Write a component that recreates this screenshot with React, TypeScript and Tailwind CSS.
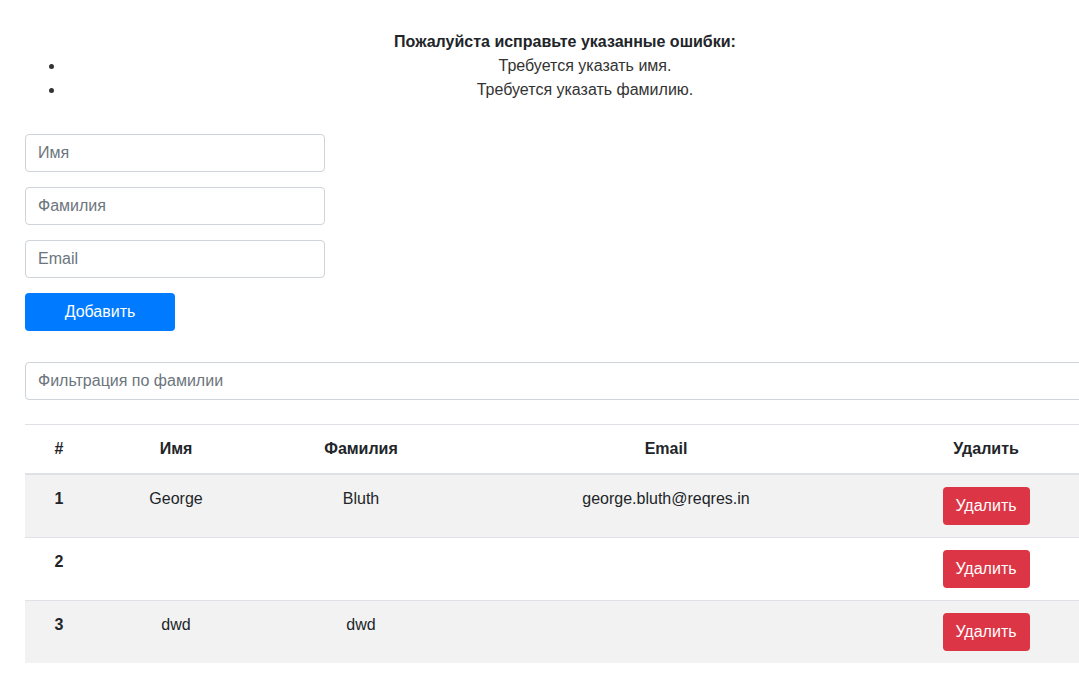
import React, { useState } from "react";

type User = {
  id: number;
  firstName: string;
  lastName: string;
  email: string;
};

const initialUsers: User[] = [
  { id: 1, firstName: "George", lastName: "Bluth", email: "george.bluth@reqres.in" },
  { id: 2, firstName: "", lastName: "", email: "" },
  { id: 3, firstName: "dwd", lastName: "dwd", email: "" },
];

const errors = ["Требуется указать имя.", "Требуется указать фамилию."];

const inputCls =
  "block h-[38px] w-[300px] rounded-[4px] border border-[#ced4da] bg-white px-3 text-base text-[#495057] outline-none placeholder:text-[#6c757d]";

export default function App() {
  const [users, setUsers] = useState<User[]>(initialUsers);
  const [filter, setFilter] = useState("");

  const shown = users.filter((u) => u.lastName.toLowerCase().includes(filter.toLowerCase()));

  return (
    <div className="w-full overflow-hidden bg-white" style={{ fontFamily: '"Liberation Sans", Arial, sans-serif' }}>
      <div className="ml-[25px] w-[1080px] pt-[30px] pb-10 text-base leading-6 text-[#212529]">
        <div className="text-center font-bold">Пожалуйста исправьте указанные ошибки:</div>
        <ul className="list-disc pl-10 text-[#333]">
          {errors.map((e) => (
            <li key={e} className="text-center">
              {e}
            </li>
          ))}
        </ul>

        <div className="mt-[32px] flex flex-col gap-[15px]">
          <input className={inputCls} placeholder="Имя" />
          <input className={inputCls} placeholder="Фамилия" />
          <input className={inputCls} placeholder="Email" />
          <button className="h-[38px] w-[150px] rounded-[4px] bg-[#007bff] text-base text-white">Добавить</button>
        </div>

        <input
          className="mt-[31px] block h-[38px] w-full rounded-[4px] border border-[#ced4da] bg-white px-3 text-base outline-none placeholder:text-[#6c757d]"
          placeholder="Фильтрация по фамилии"
          value={filter}
          onChange={(e) => setFilter(e.target.value)}
        />

        <table className="mt-[24px] w-[1078px] table-fixed border-collapse">
          <colgroup>
            <col className="w-[68px]" />
            <col className="w-[166px]" />
            <col className="w-[204px]" />
            <col className="w-[406px]" />
            <col className="w-[234px]" />
          </colgroup>
          <thead>
            <tr className="border-t border-b-2 border-t-[#dee2e6] border-b-[#dee2e6]">
              {["#", "Имя", "Фамилия", "Email", "Удалить"].map((h) => (
                <th key={h} className="p-3 text-center align-bottom font-bold">
                  {h}
                </th>
              ))}
            </tr>
          </thead>
          <tbody>
            {shown.map((u, i) => (
              <tr key={u.id} className={`border-t border-[#dee2e6] ${i % 2 === 0 ? "bg-[#f2f2f2]" : "bg-white"}`}>
                <td className="p-3 text-center align-top font-bold">{u.id}</td>
                <td className="p-3 text-center align-top">{u.firstName}</td>
                <td className="p-3 text-center align-top">{u.lastName}</td>
                <td className="p-3 text-center align-top">{u.email}</td>
                <td className="p-3 text-center align-top">
                  <button
                    className="h-[38px] w-[87px] rounded-[4px] bg-[#dc3545] text-base text-white"
                    onClick={() => setUsers((prev) => prev.filter((x) => x.id !== u.id))}
                  >
                    Удалить
                  </button>
                </td>
              </tr>
            ))}
          </tbody>
        </table>
      </div>
    </div>
  );
}
